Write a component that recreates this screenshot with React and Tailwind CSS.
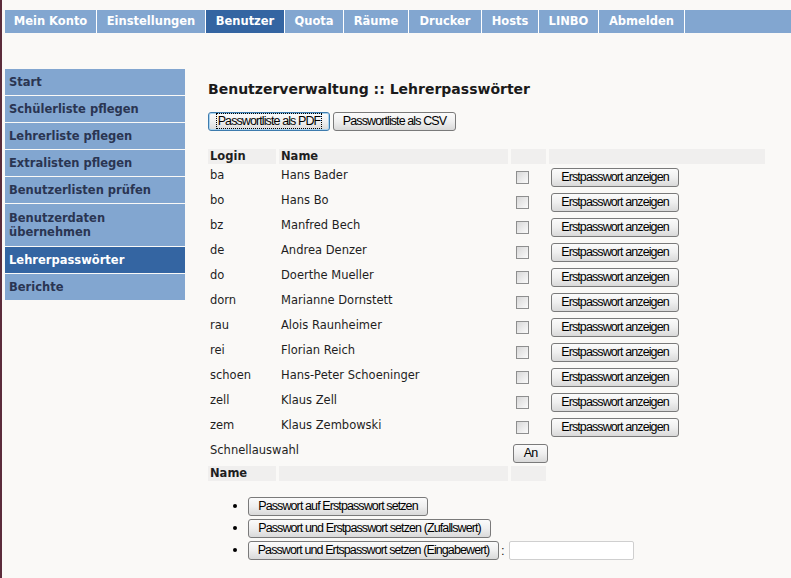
import { useState } from "react";

const navItems = [
    { label: "Mein Konto", w: "w-[92px]" },
    { label: "Einstellungen", w: "w-[109px]" },
    { label: "Benutzer", w: "w-[79px]", active: true },
    { label: "Quota", w: "w-[59px]" },
    { label: "Räume", w: "w-[65px]" },
    { label: "Drucker", w: "w-[73px]" },
    { label: "Hosts", w: "w-[57px]" },
    { label: "LINBO", w: "w-[60px]" },
    { label: "Abmelden", w: "w-[86px]" },
];

const sideItems = [
    "Start",
    "Schülerliste pflegen",
    "Lehrerliste pflegen",
    "Extralisten pflegen",
    "Benutzerlisten prüfen",
    "Benutzerdaten übernehmen",
    "Lehrerpasswörter",
    "Berichte",
];

const teachers = [
    ["ba", "Hans Bader"],
    ["bo", "Hans Bo"],
    ["bz", "Manfred Bech"],
    ["de", "Andrea Denzer"],
    ["do", "Doerthe Mueller"],
    ["dorn", "Marianne Dornstett"],
    ["rau", "Alois Raunheimer"],
    ["rei", "Florian Reich"],
    ["schoen", "Hans-Peter Schoeninger"],
    ["zell", "Klaus Zell"],
    ["zem", "Klaus Zembowski"],
];

// windows-xp style button
function XpButton({ children, className = "", focused = false }) {
    return (
        <button
            className={`h-[19px] shrink-0 whitespace-nowrap rounded-[3px] border bg-linear-to-b from-[#fbfbfb] via-[#efefef] to-[#d9d9d9] font-['Liberation_Sans',Arial,sans-serif] text-[12.5px] tracking-[-0.9px] leading-none text-black ${focused ? "border-[#3d7bad] shadow-[inset_0_0_0_1px_#a9d3f0]" : "border-[#7a7a7a]"} ${className}`}
        >
            {focused ? (
                <span className="border border-dotted border-black px-[1px]">{children}</span>
            ) : (
                children
            )}
        </button>
    );
}

function Check({ checked, onClick }) {
    return (
        <span
            onClick={onClick}
            className="block w-[13px] h-[13px] border border-[#8e8f8f] bg-linear-to-br from-[#d8d8d8] to-[#fbfbfb] text-[10px] leading-[11px] text-center"
        >
            {checked ? "✓" : ""}
        </span>
    );
}

function App() {
    const [checked, setChecked] = useState([]);

    function toggle(login) {
        setChecked((prev) => (prev.includes(login) ? prev.filter((l) => l !== login) : [...prev, login]));
    }

    return (
        <div className="min-h-screen bg-[#faf9f7] border-l-2 border-[#5b2c3b] font-['DejaVu_Sans',Verdana,sans-serif] text-[#1e1e1e]">
            {/* top navigation */}
            <div className="pt-[10px] pl-[3px]">
                <div className="flex h-[23px] bg-[#82a6d0]">
                    {navItems.map((item) => (
                        <div
                            key={item.label}
                            className={`${item.w} flex items-center justify-center border-r border-white text-[11.5px] font-bold text-white ${item.active ? "bg-[#3465a2]" : ""}`}
                        >
                            {item.label}
                        </div>
                    ))}
                    <div className="flex-1" />
                </div>
            </div>

            <div className="flex">
                {/* sidebar */}
                <div className="ml-[3px] mt-[36px] w-[180px] flex flex-col gap-[1px] self-start">
                    {sideItems.map((label) => {
                        const active = label === "Lehrerpasswörter";
                        const twoLines = label === "Benutzerdaten übernehmen";
                        return (
                            <div
                                key={label}
                                className={`min-h-[26px] flex items-center pl-[4px] pr-2 ${twoLines ? "py-[7px]" : "py-[6px]"} text-[11.5px] leading-[14px] font-bold ${active ? "bg-[#3465a2] text-white" : "bg-[#82a6d0] text-[#2a3552]"}`}
                            >
                                {twoLines ? (
                                    <span>
                                        Benutzerdaten
                                        <br />
                                        übernehmen
                                    </span>
                                ) : (
                                    label
                                )}
                            </div>
                        );
                    })}
                </div>

                {/* main */}
                <div className="ml-[23px] pt-[47px] flex flex-col">
                    <h1 className="text-[14px] leading-[18px] font-bold text-[#1a1a1a]">
                        Benutzerverwaltung :: Lehrerpasswörter
                    </h1>

                    <div className="flex gap-[3px] mt-[14px]">
                        <XpButton focused className="w-[122px]">Passwortliste als PDF</XpButton>
                        <XpButton className="w-[123px]">Passwortliste als CSV</XpButton>
                    </div>

                    {/* table */}
                    <div className="mt-[18px] text-[11.5px]">
                        <div className="flex gap-[3px] h-[15px]">
                            <div className="w-[68px] bg-[#f0efee] pl-[2px] pt-[1px] leading-[13px] font-bold">Login</div>
                            <div className="w-[229px] bg-[#f0efee] pl-[2px] pt-[1px] leading-[13px] font-bold">Name</div>
                            <div className="w-[35px] bg-[#f0efee]" />
                            <div className="w-[216px] bg-[#f0efee]" />
                        </div>

                        <div className="mt-[2px]">
                            {teachers.map(([login, name]) => (
                                <div key={login} className="flex gap-[3px] h-[25px]">
                                    <div className="w-[68px] pl-[2px] pt-[2px] leading-[15px]">{login}</div>
                                    <div className="w-[229px] pl-[2px] pt-[2px] leading-[15px]">{name}</div>
                                    <div className="w-[35px] pl-[5px] pt-[5px]">
                                        <Check checked={checked.includes(login)} onClick={() => toggle(login)} />
                                    </div>
                                    <div className="w-[216px] pl-[2px] pt-[2px]">
                                        <XpButton className="w-[128px]">Erstpasswort anzeigen</XpButton>
                                    </div>
                                </div>
                            ))}

                            <div className="flex gap-[3px] h-[25px]">
                                <div className="w-[300px] pl-[2px] pt-[2px] leading-[15px]">Schnellauswahl</div>
                                <div className="w-[35px] pl-[2px] pt-[3px]">
                                    <XpButton className="w-[35px]">An</XpButton>
                                </div>
                            </div>
                        </div>

                        <div className="flex gap-[3px] h-[15px]">
                            <div className="w-[68px] bg-[#f0efee] pl-[2px] pt-[1px] leading-[13px] font-bold">Name</div>
                            <div className="w-[229px] bg-[#f0efee]" />
                            <div className="w-[35px] bg-[#f0efee]" />
                        </div>
                    </div>

                    {/* actions */}
                    <ul className="mt-[15px] ml-[40px] flex flex-col gap-[2px] list-disc text-[13px] marker:text-black">
                        <li>
                            <XpButton className="w-[180px] align-middle">Passwort auf Erstpasswort setzen</XpButton>
                        </li>
                        <li>
                            <XpButton className="w-[243px] align-middle">Passwort und Erstpasswort setzen (Zufallswert)</XpButton>
                        </li>
                        <li>
                            <span className="inline-flex items-center gap-[2px] align-middle">
                                <XpButton className="w-[251px]">Passwort und Ertspasswort setzen (Eingabewert)</XpButton>
                                <span className="font-['Liberation_Sans',Arial,sans-serif] text-[13px]">:</span>
                                <input className="ml-[2px] w-[125px] h-[19px] bg-white border border-[#cfcfcf] rounded-[2px] outline-none" />
                            </span>
                        </li>
                    </ul>
                </div>
            </div>
        </div>
    );
}

export default App;
